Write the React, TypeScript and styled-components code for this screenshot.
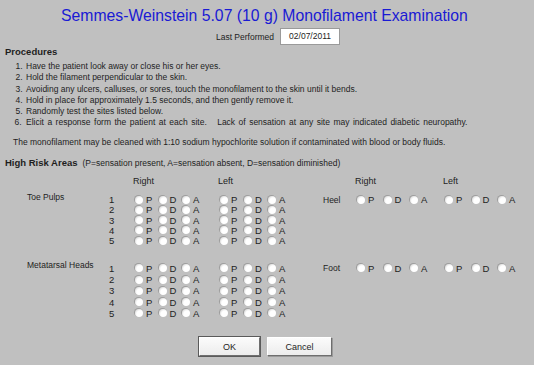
import React from 'react';
import styled, { createGlobalStyle } from 'styled-components';

const steps = [
  'Have the patient look away or close his or her eyes.',
  'Hold the filament perpendicular to the skin.',
  'Avoiding any ulcers, calluses, or sores, touch the monofilament to the skin until it bends.',
  'Hold in place for approximately 1.5 seconds, and then gently remove it.',
  'Randomly test the sites listed below.',
  'Elicit a response form the patient at each site.\u00a0\u00a0 Lack of sensation at any site may indicated diabetic neuropathy.',
];

const groups = [
  { name: 'Toe Pulps', site: 'Heel', rowHeight: 10.25, gap: 9 },
  { name: 'Metatarsal Heads', site: 'Foot', rowHeight: 11.25, gap: 17 },
];

const choices = ['P', 'D', 'A'];

export default function App() {
  return (
    <>
      <GlobalStyle />
      <Page>
        <Title>Semmes-Weinstein 5.07 (10 g) Monofilament Examination</Title>

        <LastPerformedRow>
          <FieldLabel>Last Performed</FieldLabel>
          <DateBox>02/07/2011</DateBox>
        </LastPerformedRow>

        <SectionHeading>Procedures</SectionHeading>
        <StepList>
          {steps.map((s, i) => (
            <Step key={s} $wide={i === steps.length - 1}>{s}</Step>
          ))}
        </StepList>
        <Note>
          The monofilament may be cleaned with 1:10 sodium hypochlorite solution if contaminated with
          blood or body fluids.
        </Note>

        <SectionHeading $top={9}>
          High Risk Areas
          <Legend>(P=sensation present, A=sensation absent, D=sensation diminished)</Legend>
        </SectionHeading>

        <Areas>
          <AreaGrid $rowHeight={10}>
            <SideHeading $col={3}>Right</SideHeading>
            <SideHeading $col={4}>Left</SideHeading>
            <SideHeading $col={6}>Right</SideHeading>
            <SideHeading $col={7}>Left</SideHeading>
          </AreaGrid>

          {groups.map((g) => (
            <AreaGrid key={g.name} $rowHeight={g.rowHeight} $top={g.gap}>
              <AreaName $col={1} $row={1}>{g.name}</AreaName>
              {[1, 2, 3, 4, 5].map((n) => (
                <React.Fragment key={n}>
                  <DigitCell $col={2} $row={n}>{n}</DigitCell>
                  <ChoiceSet col={3} row={n} step={23.5} />
                  <ChoiceSet col={4} row={n} step={24} />
                </React.Fragment>
              ))}
              <SiteName $col={5} $row={1}>{g.site}</SiteName>
              <ChoiceSet col={6} row={1} step={26.5} />
              <ChoiceSet col={7} row={1} step={26.5} />
            </AreaGrid>
          ))}
        </Areas>

        <ButtonRow>
          <Button $primary $width={61}>OK</Button>
          <Button $width={65}>Cancel</Button>
        </ButtonRow>
      </Page>
    </>
  );
}

function ChoiceSet({ col, row, step }: { col: number; row: number; step: number }) {
  return (
    <Choices $col={col} $row={row}>
      {choices.map((c) => (
        <Choice key={c} $width={step}>
          <RadioDot />
          <ChoiceLetter>{c}</ChoiceLetter>
        </Choice>
      ))}
    </Choices>
  );
}

const GlobalStyle = createGlobalStyle`
  html, body {
    margin: 0;
    background: #c0c0c0;
  }
  body {
    font-family: "Liberation Sans", Arial, sans-serif;
    color: #1e1e1e;
  }
`;

const Page = styled.div`
  width: 534px;
  height: 365px;
  box-sizing: border-box;
  padding: 6px 0 0 5px;
  background: #c0c0c0;
  overflow: hidden;
`;

const Title = styled.h1`
  margin: 0;
  font-size: 15.75px;
  line-height: 20px;
  font-weight: normal;
  color: #1a1ad4;
  text-align: center;
  padding-right: 10px;
`;

const LastPerformedRow = styled.div`
  display: flex;
  justify-content: center;
  align-items: center;
  gap: 6px;
  margin-top: 2px;
  padding-left: 17px;
`;

const FieldLabel = styled.span`
  font-size: 8.5px;
`;

const DateBox = styled.div`
  width: 58px;
  height: 15px;
  background: #fff;
  border: 1px solid #9a9a9a;
  font-size: 8.5px;
  line-height: 15px;
  text-align: center;
`;

const SectionHeading = styled.div<{ $top?: number }>`
  margin-top: ${(p) => p.$top ?? 1}px;
  font-size: 9.5px;
  line-height: 11px;
  font-weight: bold;
  white-space: nowrap;
`;

const Legend = styled.span`
  font-weight: normal;
  font-size: 8.5px;
  margin-left: 5px;
`;

const StepList = styled.ol`
  margin: 4px 0 0;
  padding-left: 20px;
  font-size: 8.5px;
  line-height: 11.25px;
`;

const Step = styled.li<{ $wide?: boolean }>`
  padding-left: 1px;
  word-spacing: ${(p) => (p.$wide ? '1.1px' : 'normal')};
`;

const Note = styled.p`
  margin: 8px 0 0 8px;
  font-size: 8.5px;
  line-height: 11px;
`;

const Areas = styled.div`
  margin-top: 7px;
  padding-left: 22px;
`;

const AreaGrid = styled.div<{ $rowHeight: number; $top?: number }>`
  display: grid;
  grid-template-columns: 82px 24px 85px 105px 32px 88px auto;
  grid-auto-rows: ${(p) => p.$rowHeight}px;
  align-items: center;
  margin-top: ${(p) => p.$top ?? 0}px;
`;

const Cell = styled.div<{ $col: number; $row?: number }>`
  grid-column: ${(p) => p.$col};
  grid-row: ${(p) => p.$row ?? 1};
  white-space: nowrap;
`;

const SideHeading = styled(Cell)`
  font-size: 9px;
`;

const AreaName = styled(Cell)`
  font-size: 8.5px;
  align-self: start;
  margin-top: -3px;
`;

const SiteName = styled(Cell)`
  font-size: 8.5px;
`;

const DigitCell = styled(Cell)`
  font-size: 9.5px;
`;

const Choices = styled(Cell)`
  display: flex;
  align-items: center;
  padding-left: 2px;
`;

const Choice = styled.label<{ $width: number }>`
  display: flex;
  align-items: center;
  width: ${(p) => p.$width}px;
  flex: none;
`;

const RadioDot = styled.span`
  width: 8px;
  height: 8px;
  border-radius: 50%;
  flex: none;
  background: radial-gradient(circle at 62% 62%, #ffffff 0%, #ffffff 45%, #e2e2e2 70%, #a8a8a8 100%);
  box-shadow: -0.5px -0.5px 0 0.5px #9e9e9e;
`;

const ChoiceLetter = styled.span`
  font-size: 9.5px;
  margin-left: 3px;
`;

const ButtonRow = styled.div`
  display: flex;
  justify-content: center;
  gap: 7px;
  margin-top: 18px;
  padding-right: 8px;
`;

const Button = styled.button<{ $primary?: boolean; $width: number }>`
  width: ${(p) => p.$width}px;
  height: 19px;
  padding: 0;
  font-family: "Liberation Sans", Arial, sans-serif;
  font-size: 9px;
  color: #1e1e1e;
  background: linear-gradient(#fbfbfb, #ececec);
  border: 1px solid;
  border-color: #ffffff #6e6e6e #6e6e6e #ffffff;
  box-shadow: ${(p) => (p.$primary ? '0 0 0 1px #5a5a5a' : '1px 1px 0 #9a9a9a')};
`;
